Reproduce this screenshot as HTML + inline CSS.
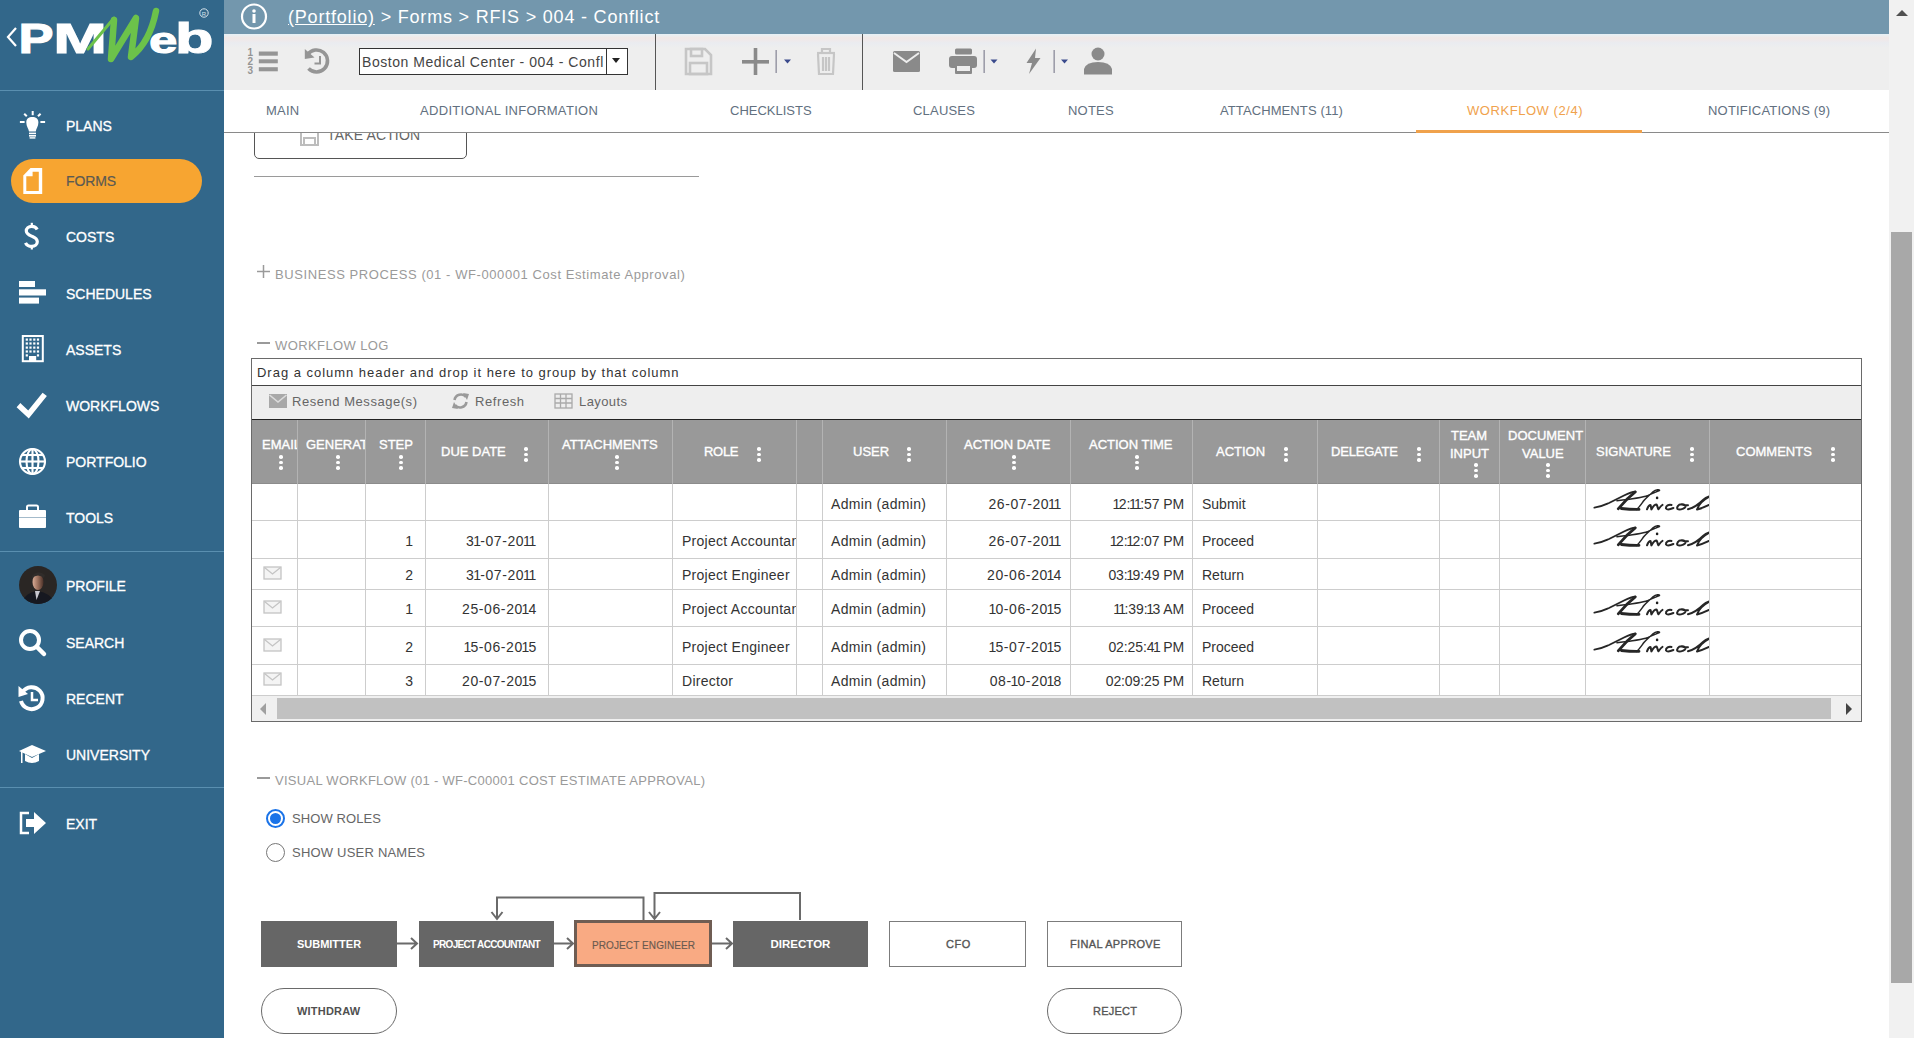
<!DOCTYPE html>
<html><head><meta charset="utf-8">
<style>
*{margin:0;padding:0;box-sizing:border-box}
html,body{width:1914px;height:1038px;overflow:hidden;background:#fff;font-family:"Liberation Sans",sans-serif}
.a{position:absolute}
.nw{white-space:nowrap}
#side{left:0;top:0;width:224px;height:1038px;background:#32678a}
.sep{left:0;width:224px;height:1px;background:#5a8fb0}
.mi{left:66px;color:#fff;font-size:14px;font-weight:400;letter-spacing:0px;-webkit-text-stroke:0.3px #fff;white-space:nowrap;line-height:16px}
.ic{fill:#fff}
#crumb{left:224px;top:0;width:1665px;height:34px;background:#7397ad}
#tool{left:224px;top:34px;width:1665px;height:56px;background:#eeeeee}
#tabs{left:224px;top:90px;width:1665px;height:43px;background:#fff;border-bottom:1px solid #8a8a8a}
.tab{top:104px;font-size:13px;color:#627080;white-space:nowrap;line-height:13px;letter-spacing:0.2px}
#vscroll{left:1889px;top:0;width:25px;height:1038px;background:#f1f1f1}
.sec{font-size:13px;color:#9a9a9a;white-space:nowrap;line-height:13px}
.g{font-size:13px;white-space:nowrap}
.hd{color:#fff;font-size:13px;line-height:13px;white-space:nowrap;-webkit-text-stroke:0.35px #fff}
.dots{width:3px}
.dots i{display:block;width:3px;height:3px;border-radius:50%;background:#fff;margin-bottom:2px}
.vl{width:1px;background:#d2d2d2}
.hl{height:1px;background:#d2d2d2}
.ct{font-size:14px;color:#333;white-space:nowrap;line-height:18px;letter-spacing:0.33px}
.box{height:46px;background:#666;color:#fff;font-weight:700;font-size:11px;display:flex;align-items:center;justify-content:center;white-space:nowrap}
</style></head>
<body>
<!-- SIDEBAR -->
<div id="side" class="a"></div>
<div class="a sep" style="top:90px"></div>
<div class="a sep" style="top:551px"></div>
<div class="a sep" style="top:787px"></div>


<svg class="a" style="left:0;top:0" width="224" height="90">
 <path d="M16,28 L8,37 L16,46" stroke="#fff" stroke-width="2.2" fill="none"/>
 <text transform="translate(18.5,53) scale(1.22,1)" fill="#fff" stroke="#fff" stroke-width="1.2" font-family="Liberation Sans" font-weight="700" font-size="43">P</text>
 <text transform="translate(53.3,53) scale(1.5,1)" fill="#fff" stroke="#fff" stroke-width="1" font-family="Liberation Sans" font-weight="700" font-size="43">M</text>
 <text transform="translate(149,53) scale(1.38,1)" fill="#fff" stroke="#fff" stroke-width="1" font-family="Liberation Sans" font-weight="700" font-size="37">e</text>
 <text transform="translate(175,53) scale(1.5,1)" fill="#fff" stroke="#fff" stroke-width="1" font-family="Liberation Sans" font-weight="700" font-size="42">b</text>
 <path d="M88,49 L114,18" stroke="#6cc24a" stroke-width="3" stroke-linecap="round" fill="none"/>
 <path d="M114,20 L111,59 L136,18 L131,57 Q150,42 156,11" stroke="#6cc24a" stroke-width="6.5" stroke-linecap="round" stroke-linejoin="round" fill="none"/>
 <circle cx="204" cy="13" r="4.2" stroke="#d8e4ec" stroke-width="1" fill="none"/>
 <text x="204" y="15.5" fill="#d8e4ec" font-family="Liberation Sans" font-size="6" text-anchor="middle">R</text>
</svg>
<div class="a" style="left:11px;top:159px;width:191px;height:44px;border-radius:22px;background:#f7a531"></div>
<div class="a mi" style="top:118px">PLANS</div>
<div class="a mi" style="top:173px;color:#5c5a52;font-weight:400;letter-spacing:-0.1px;-webkit-text-stroke:0.2px #5c5a52">FORMS</div>
<div class="a mi" style="top:229px">COSTS</div>
<div class="a mi" style="top:286px">SCHEDULES</div>
<div class="a mi" style="top:342px">ASSETS</div>
<div class="a mi" style="top:398px">WORKFLOWS</div>
<div class="a mi" style="top:454px">PORTFOLIO</div>
<div class="a mi" style="top:510px">TOOLS</div>
<div class="a mi" style="top:578px">PROFILE</div>
<div class="a mi" style="top:635px">SEARCH</div>
<div class="a mi" style="top:691px">RECENT</div>
<div class="a mi" style="top:747px">UNIVERSITY</div>
<div class="a mi" style="top:816px">EXIT</div>
<svg class="a" style="left:0;top:100px" width="60" height="750">
 <!-- plans bulb -->
 <g fill="#fff">
  <path d="M26.3,22.5 C26.3,18.5 28.8,17 32.3,17 C35.8,17 38.4,18.5 38.4,22.5 C38.4,26.5 36,28.5 35.8,31.6 L29,31.6 C28.7,28.5 26.3,26.5 26.3,22.5Z"/>
  <rect x="29" y="32.6" width="7" height="1.6"/>
  <rect x="29" y="35" width="7" height="1.6"/>
  <rect x="29.6" y="37.2" width="5.8" height="1.4"/>
  <rect x="31.7" y="11" width="2" height="4.2"/>
  <rect x="19.9" y="21" width="4.7" height="2"/>
  <rect x="40.4" y="21" width="4.7" height="2"/>
 </g>
 <path d="M24.2,13.7 L26.8,16.3 M40.6,13.7 L38,16.3" stroke="#fff" stroke-width="2"/>
 <!-- forms doc: y 168-194 -> local 68-94 -->
 <path d="M23.3,75.5 L30.5,68 L42.2,68 L42.2,94 L23.3,94 Z" fill="#fff"/>
 <path d="M26.3,76.3 L32.6,76.3 L32.6,71.7 L38.8,71.7 L38.8,91 L26.3,91 Z" fill="#f7a531"/>
 <!-- costs $: y 222-249 -> 122-149 -->
 <path d="M37.2,129.5 C36,127.2 34,126.4 31.8,126.4 C28.5,126.4 26.3,128.5 26.3,131 C26.3,134 29,135 32,136.3 C35,137.5 37.3,138.8 37.3,141.8 C37.3,144.5 35,146.3 31.8,146.3 C28.5,146.3 26.5,145 25.5,142.8" fill="none" stroke="#fff" stroke-width="3.2"/><rect x="30.7" y="122.8" width="2.2" height="3.5" fill="#fff"/><rect x="30.7" y="146.2" width="2.2" height="3.3" fill="#fff"/>
 <!-- schedules: 280-303 -> 180-203 -->
 <g fill="#fff"><rect x="19" y="181" width="16" height="6"/><rect x="19" y="189.3" width="27" height="6.2"/><rect x="19" y="197.6" width="20" height="6"/></g>
 <!-- assets: 335-362 -> 235-262 -->
 <g>
  <rect x="22.8" y="236" width="20" height="25.2" fill="none" stroke="#fff" stroke-width="2"/>
  <g fill="#fff"><rect x="25.7" y="238.5" width="2.2" height="2.2"/><rect x="29.4" y="238.5" width="2.2" height="2.2"/><rect x="33.2" y="238.5" width="2.2" height="2.2"/><rect x="36.9" y="238.5" width="2.2" height="2.2"/><rect x="25.7" y="242.4" width="2.2" height="2.2"/><rect x="29.4" y="242.4" width="2.2" height="2.2"/><rect x="33.2" y="242.4" width="2.2" height="2.2"/><rect x="36.9" y="242.4" width="2.2" height="2.2"/><rect x="25.7" y="246.5" width="2.2" height="2.2"/><rect x="29.4" y="246.5" width="2.2" height="2.2"/><rect x="33.2" y="246.5" width="2.2" height="2.2"/><rect x="36.9" y="246.5" width="2.2" height="2.2"/><rect x="25.7" y="250.4" width="2.2" height="2.2"/><rect x="29.4" y="250.4" width="2.2" height="2.2"/><rect x="33.2" y="250.4" width="2.2" height="2.2"/><rect x="36.9" y="250.4" width="2.2" height="2.2"/><rect x="25.7" y="254.3" width="2.2" height="2.2"/><rect x="36.9" y="254.3" width="2.2" height="2.2"/><rect x="29" y="256" width="7.2" height="5"/></g>
 </g>
 <!-- workflows check: 393-418 -> 293-318 -->
 <path d="M20.5,307 L28.5,314.5 L43,296.5" stroke="#fff" stroke-width="5.5" fill="none" stroke-linecap="square" stroke-linejoin="miter"/>
 <!-- portfolio globe: 448-475 -> 348-375 -->
 <g fill="none" stroke="#fff" stroke-width="2.1">
  <circle cx="32.5" cy="361.5" r="12.5"/>
  <ellipse cx="32.5" cy="361.5" rx="6" ry="12.5"/>
  <line x1="32.5" y1="349" x2="32.5" y2="374"/>
  <line x1="20" y1="361.5" x2="45" y2="361.5"/>
  <line x1="22" y1="355" x2="43" y2="355"/>
  <line x1="22" y1="368" x2="43" y2="368"/>
 </g>
 <!-- tools briefcase: 506-528 -> 406-428 -->
 <g fill="#fff">
  <rect x="19" y="410" width="27" height="18" rx="1"/>
  <rect x="27" y="405.5" width="11" height="6" rx="1.5" fill="none" stroke="#fff" stroke-width="2"/>
  <rect x="19" y="417" width="27" height="1" fill="#32678a" opacity="0.45"/>
 </g>
 <!-- profile avatar: center (38,585) -> local 485 -->
 <defs><linearGradient id="fg" x1="0" x2="1" y1="0" y2="0"><stop offset="0" stop-color="#d8ab95"/><stop offset="0.5" stop-color="#9a6f5c"/><stop offset="1" stop-color="#4a3028"/></linearGradient></defs>
 <clipPath id="av"><circle cx="38" cy="485" r="19"/></clipPath>
 <g clip-path="url(#av)">
  <rect x="19" y="466" width="38" height="38" fill="#2a2624"/>
  <ellipse cx="38" cy="482" rx="5.5" ry="8" fill="url(#fg)"/>
  <path d="M32,476 Q38,469 45,475 L44,478 Q38,473 32,478Z" fill="#302c2a"/>
  <path d="M20,505 Q24,493 37,491 Q52,493 56,505Z" fill="#161820"/>
  <path d="M35,491 L36.5,500 L40,491Z" fill="#c8c8d0"/>
 </g>
 <!-- search: 628-655 -> 528-555 -->
 <circle cx="30" cy="540" r="9" fill="none" stroke="#fff" stroke-width="4"/>
 <path d="M37,547 L44,554" stroke="#fff" stroke-width="4.5" stroke-linecap="round"/>
 <!-- recent: 685-711 -> 585-611 -->
 <path d="M22.5,592 A11,11 0 1 1 21,601" fill="none" stroke="#fff" stroke-width="4"/>
 <path d="M18.5,586 L28,594 L18.5,597Z" fill="#fff"/>
 <path d="M32,592 L32,600 L38,600" fill="none" stroke="#fff" stroke-width="2.5"/>
 <!-- university: 745-764 -> 645-664 -->
 <path d="M19,651 L32,645 L46,651 L32,657Z" fill="#fff"/>
 <path d="M25,654 L25,661 Q32,665 39,661 L39,654 L32,658Z" fill="#fff"/>
 <rect x="21" y="652" width="1.5" height="11" fill="#fff"/>
 <!-- exit: 812-834 -> 712-734 -->
 <path d="M29,713 L21,713 L21,733 L29,733" fill="none" stroke="#fff" stroke-width="2.5"/>
 <path d="M26,719 L34,719 L34,712 L46,723 L34,734 L34,727 L26,727Z" fill="#fff"/>
</svg>


<!-- CONTENT -->
<div class="a" style="left:254px;top:100px;width:213px;height:59px;border:1px solid #555;border-radius:5px;background:#fff"></div>
<svg class="a" style="left:299px;top:126px" width="22" height="22"><g fill="none" stroke="#bdbdbd" stroke-width="2"><path d="M2,2 L16,2 L19,5 L19,19 L2,19Z"/><rect x="5" y="12" width="11" height="7"/></g></svg>
<div class="a nw" style="left:327px;top:127px;font-size:14px;line-height:16px;color:#666;letter-spacing:0.15px">TAKE ACTION</div>
<div class="a" style="left:254px;top:176px;width:445px;height:1px;background:#9a9a9a"></div>
<!-- tabs cover (the button is under the tabs bar) -->

<!-- CRUMB -->
<div id="crumb" class="a"></div>
<div id="tool" class="a"></div>
<div id="tabs" class="a"></div>
<div id="vscroll" class="a"></div>

<!-- crumb content -->
<svg class="a" style="left:240px;top:3px" width="28" height="28">
 <circle cx="14" cy="13.5" r="12" fill="none" stroke="#fff" stroke-width="2.2"/>
 <circle cx="14" cy="8" r="1.8" fill="#fff"/>
 <rect x="12.5" y="11" width="3" height="9" fill="#fff"/>
</svg>
<div class="a nw" style="left:288px;top:6px;font-size:18px;line-height:22px;color:#fff;letter-spacing:0.8px"><span style="text-decoration:underline">(Portfolio)</span> &gt; Forms &gt; RFIS &gt; 004 - Conflict</div>
<!-- toolbar content -->
<div class="a" style="left:224px;top:34px;width:1665px;height:14px;background:linear-gradient(#e6f0f6 0px,#ecedee 2px,#f1e8e6 4px,#efe9ea 6px,#eaecf0 9px,#eeeeee 14px)"></div>
<div class="a" style="left:655px;top:34px;width:1px;height:56px;background:#555"></div>
<div class="a" style="left:862px;top:34px;width:1px;height:56px;background:#555"></div>
<svg class="a" style="left:240px;top:40px" width="900" height="45">
 <!-- list icon x249-278 y47-75 -->
 <g fill="#959595">
  <rect x="18.8" y="11.5" width="19" height="4.2"/>
  <rect x="18.8" y="19.3" width="19" height="4"/>
  <rect x="18.8" y="27.2" width="19" height="4.1"/>
  <text x="7.5" y="15.8" font-family="Liberation Sans" font-size="10" font-weight="700">1</text>
  <text x="7.5" y="24.5" font-family="Liberation Sans" font-size="10" font-weight="700">2</text>
  <text x="7.5" y="34" font-family="Liberation Sans" font-size="10" font-weight="700">3</text>
 </g>
 <!-- history -->
 <g>
  <path d="M67.6,14.5 A11,11 0 1 1 68.5,28.5" fill="none" stroke="#959595" stroke-width="3.6"/>
  <path d="M64.8,9 L74.5,17.5 L64.8,19Z" fill="#959595"/>
  <path d="M80,16 L80,23.5 L74.5,23.5" fill="none" stroke="#959595" stroke-width="2"/>
 </g>
 <!-- save x685-712 y48-75 -->
 <g fill="none" stroke="#c6c6c6" stroke-width="2.6">
  <path d="M446,9 L465,9 L471,15 L471,34 L446,34Z"/>
  <rect x="451" y="9" width="11" height="7"/>
  <rect x="450" y="23" width="17" height="11"/>
 </g>
 <!-- plus x742-769 -->
 <g fill="#8a8a8a"><rect x="502" y="20" width="27" height="3.6"/><rect x="513.7" y="8" width="3.6" height="27"/></g>
 <rect x="535.5" y="10" width="1.3" height="23" fill="#8a8a9a"/>
 <path d="M544,19.5 L551,19.5 L547.5,23.5Z" fill="#3a4a8c"/>
 <!-- trash x814-837 -->
 <g fill="none" stroke="#c6c6c6" stroke-width="2.2">
  <path d="M577,13 L595,13"/>
  <path d="M582,13 L582,9 L590,9 L590,13"/>
  <path d="M578,14 L579,34 L593,34 L594,14"/>
  <path d="M583,17 L583,31 M586,17 L586,31 M589,17 L589,31"/>
 </g>
 <!-- mail x893-920 y50-72 -->
 <rect x="653" y="11" width="27" height="21" rx="1.5" fill="#8a8a8a"/>
 <path d="M654,13 L666.5,22 L679,13" fill="none" stroke="#eeeeee" stroke-width="2"/>
 <!-- print x949-976 y48-74 -->
 <g fill="#8a8a8a">
  <rect x="715" y="8.5" width="17" height="6" rx="1.5"/>
  <rect x="709" y="16" width="28" height="12" rx="3"/>
  <rect x="715" y="24" width="17" height="10" rx="1"/>
  <rect x="717" y="26" width="13" height="5" fill="#eeeeee"/>
 </g>
 <rect x="743.5" y="10" width="1.3" height="23" fill="#8a8a9a"/>
 <path d="M750.5,19.5 L757.5,19.5 L754,23.5Z" fill="#3a4a8c"/>
 <!-- bolt x1026-1041 -->
 <path d="M796,8.5 L786.5,23 L792,23 L789,34 L800.5,18 L795,18Z" fill="#8a8a8a"/>
 <rect x="813.5" y="10" width="1.3" height="23" fill="#8a8a9a"/>
 <path d="M821,19.5 L828,19.5 L824.5,23.5Z" fill="#3a4a8c"/>
 <!-- user x1084-1112 -->
 <g fill="#8a8a8a"><circle cx="858" cy="14" r="6.5"/><path d="M844,34.5 L844,29 Q846,22 858,22 Q870,22 872,29 L872,34.5Z"/></g>
</svg>
<div class="a" style="left:359px;top:48px;width:269px;height:27px;border:1px solid #333;background:#fff"></div>
<div class="a" style="left:606px;top:49px;width:1px;height:25px;background:#333"></div>
<svg class="a" style="left:611px;top:57px" width="12" height="8"><path d="M1,1 L9,1 L5,6Z" fill="#222"/></svg>
<div class="a nw" style="left:362px;top:54px;font-size:14px;line-height:16px;color:#444;letter-spacing:0.55px;width:243px;overflow:hidden">Boston Medical Center - 004 - Confl</div>
<!-- tabs -->
<div class="a tab" style="left:266px">MAIN</div>
<div class="a tab" style="left:420px;letter-spacing:0.32px">ADDITIONAL INFORMATION</div>
<div class="a tab" style="left:730px;letter-spacing:0">CHECKLISTS</div>
<div class="a tab" style="left:913px">CLAUSES</div>
<div class="a tab" style="left:1068px">NOTES</div>
<div class="a tab" style="left:1220px;letter-spacing:0.1px">ATTACHMENTS (11)</div>
<div class="a tab" style="left:1467px;color:#f0a24c;letter-spacing:0.55px">WORKFLOW (2/4)</div>
<div class="a tab" style="left:1708px">NOTIFICATIONS (9)</div>
<div class="a" style="left:1416px;top:130px;width:226px;height:3px;background:#f0a24c"></div>

<!-- sections -->
<svg class="a" style="left:256px;top:264px" width="16" height="16"><path d="M1,7.5 L14,7.5 M7.5,1 L7.5,14" stroke="#9a9a9a" stroke-width="1.5"/></svg>
<div class="a sec" style="left:275px;top:268px;letter-spacing:0.58px">BUSINESS PROCESS (01 - WF-000001 Cost Estimate Approval)</div>
<div class="a" style="left:257px;top:342px;width:13px;height:1.5px;background:#9a9a9a"></div>
<div class="a sec" style="left:275px;top:339px;letter-spacing:0.4px">WORKFLOW LOG</div>
<div class="a" style="left:257px;top:777px;width:13px;height:1.5px;background:#9a9a9a"></div>
<div class="a sec" style="left:275px;top:774px;letter-spacing:0.28px">VISUAL WORKFLOW (01 - WF-C00001 COST ESTIMATE APPROVAL)</div>
<!-- radios -->
<div class="a" style="left:266px;top:809px;width:19px;height:19px;border-radius:50%;border:2px solid #1a73e8;background:#fff"></div>
<div class="a" style="left:270px;top:813px;width:11px;height:11px;border-radius:50%;background:#1a73e8"></div>
<div class="a sec" style="left:292px;top:812px;color:#666;letter-spacing:0.1px">SHOW ROLES</div>
<div class="a" style="left:266px;top:843px;width:19px;height:19px;border-radius:50%;border:1.5px solid #777;background:#fff"></div>
<div class="a sec" style="left:292px;top:846px;color:#666;letter-spacing:0.21px">SHOW USER NAMES</div>

<!-- GRID START -->
<div class="a" style="left:251px;top:358px;width:1611px;height:364px;border:1px solid #6a6a6a;background:#fff"></div>
<div class="a g" style="left:257px;top:365px;font-size:13px;line-height:15px;color:#333;letter-spacing:0.98px">Drag a column header and drop it here to group by that column</div>
<div class="a" style="left:252px;top:385px;width:1609px;height:1px;background:#444"></div>
<div class="a" style="left:252px;top:386px;width:1609px;height:33px;background:#eeeeee"></div>
<div class="a" style="left:252px;top:419px;width:1609px;height:1px;background:#222"></div>
<svg class="a" style="left:268px;top:393px" width="20" height="16"><rect x="1" y="1" width="18" height="14" fill="#a8a8a8"/><path d="M1.5,2 L10,9 L18.5,2" fill="none" stroke="#dcdcdc" stroke-width="1.6"/></svg>
<div class="a g" style="left:292px;top:394px;font-size:13px;line-height:15px;color:#666;letter-spacing:0.54px">Resend Message(s)</div>
<svg class="a" style="left:451px;top:392px" width="19" height="18"><g fill="none" stroke="#9a9a9a" stroke-width="2.6"><path d="M3.5,8 A6.5,6.5 0 0 1 15,5"/><path d="M15.5,10 A6.5,6.5 0 0 1 4,13"/></g><path d="M12,1 L18,2 L16,8Z M7,17 L1,16 L3,10Z" fill="#9a9a9a"/></svg>
<div class="a g" style="left:475px;top:394px;font-size:13px;line-height:15px;color:#666;letter-spacing:0.58px">Refresh</div>
<svg class="a" style="left:554px;top:393px" width="20" height="16"><g fill="none" stroke="#aaa" stroke-width="1.3"><rect x="1" y="1" width="17" height="14"/><path d="M1,5.5 L18,5.5 M1,10 L18,10 M6.5,1 L6.5,15 M12,1 L12,15"/></g></svg>
<div class="a g" style="left:579px;top:394px;font-size:13px;line-height:15px;color:#666;letter-spacing:0.41px">Layouts</div>
<div class="a" style="left:252px;top:420px;width:1609px;height:64px;background:#999999"></div>
<div class="a" style="left:252px;top:483px;width:1609px;height:1px;background:#8c8c8c"></div>
<div class="a" style="left:297px;top:420px;width:1px;height:64px;background:#b3b3b3"></div>
<div class="a" style="left:365px;top:420px;width:1px;height:64px;background:#b3b3b3"></div>
<div class="a" style="left:425px;top:420px;width:1px;height:64px;background:#b3b3b3"></div>
<div class="a" style="left:548px;top:420px;width:1px;height:64px;background:#b3b3b3"></div>
<div class="a" style="left:672px;top:420px;width:1px;height:64px;background:#b3b3b3"></div>
<div class="a" style="left:796px;top:420px;width:1px;height:64px;background:#b3b3b3"></div>
<div class="a" style="left:822px;top:420px;width:1px;height:64px;background:#b3b3b3"></div>
<div class="a" style="left:946px;top:420px;width:1px;height:64px;background:#b3b3b3"></div>
<div class="a" style="left:1070px;top:420px;width:1px;height:64px;background:#b3b3b3"></div>
<div class="a" style="left:1192px;top:420px;width:1px;height:64px;background:#b3b3b3"></div>
<div class="a" style="left:1317px;top:420px;width:1px;height:64px;background:#b3b3b3"></div>
<div class="a" style="left:1439px;top:420px;width:1px;height:64px;background:#b3b3b3"></div>
<div class="a" style="left:1499px;top:420px;width:1px;height:64px;background:#b3b3b3"></div>
<div class="a" style="left:1585px;top:420px;width:1px;height:64px;background:#b3b3b3"></div>
<div class="a" style="left:1709px;top:420px;width:1px;height:64px;background:#b3b3b3"></div>
<div class="a hd" style="left:262px;top:438px;letter-spacing:0.00px;width:35px;overflow:hidden">EMAIL</div>
<div class="a" style="left:279.2px;top:455.0px;width:4px"><i style="display:block;width:3.6px;height:3.6px;border-radius:50%;background:#fff;margin-bottom:2px"></i><i style="display:block;width:3.6px;height:3.6px;border-radius:50%;background:#fff;margin-bottom:2px"></i><i style="display:block;width:3.6px;height:3.6px;border-radius:50%;background:#fff"></i></div>
<div class="a hd" style="left:306px;top:438px;letter-spacing:0.00px;width:59px;overflow:hidden">GENERATED</div>
<div class="a" style="left:336.2px;top:455.0px;width:4px"><i style="display:block;width:3.6px;height:3.6px;border-radius:50%;background:#fff;margin-bottom:2px"></i><i style="display:block;width:3.6px;height:3.6px;border-radius:50%;background:#fff;margin-bottom:2px"></i><i style="display:block;width:3.6px;height:3.6px;border-radius:50%;background:#fff"></i></div>
<div class="a hd" style="left:379px;top:438px;letter-spacing:0.00px">STEP</div>
<div class="a" style="left:399.2px;top:455.0px;width:4px"><i style="display:block;width:3.6px;height:3.6px;border-radius:50%;background:#fff;margin-bottom:2px"></i><i style="display:block;width:3.6px;height:3.6px;border-radius:50%;background:#fff;margin-bottom:2px"></i><i style="display:block;width:3.6px;height:3.6px;border-radius:50%;background:#fff"></i></div>
<div class="a hd" style="left:441px;top:445px;letter-spacing:0.00px">DUE DATE</div>
<div class="a" style="left:524.2px;top:447.0px;width:4px"><i style="display:block;width:3.6px;height:3.6px;border-radius:50%;background:#fff;margin-bottom:2px"></i><i style="display:block;width:3.6px;height:3.6px;border-radius:50%;background:#fff;margin-bottom:2px"></i><i style="display:block;width:3.6px;height:3.6px;border-radius:50%;background:#fff"></i></div>
<div class="a hd" style="left:562px;top:438px;letter-spacing:0.00px">ATTACHMENTS</div>
<div class="a" style="left:615.2px;top:455.0px;width:4px"><i style="display:block;width:3.6px;height:3.6px;border-radius:50%;background:#fff;margin-bottom:2px"></i><i style="display:block;width:3.6px;height:3.6px;border-radius:50%;background:#fff;margin-bottom:2px"></i><i style="display:block;width:3.6px;height:3.6px;border-radius:50%;background:#fff"></i></div>
<div class="a hd" style="left:704px;top:445px;letter-spacing:-0.30px">ROLE</div>
<div class="a" style="left:757.2px;top:447.0px;width:4px"><i style="display:block;width:3.6px;height:3.6px;border-radius:50%;background:#fff;margin-bottom:2px"></i><i style="display:block;width:3.6px;height:3.6px;border-radius:50%;background:#fff;margin-bottom:2px"></i><i style="display:block;width:3.6px;height:3.6px;border-radius:50%;background:#fff"></i></div>
<div class="a hd" style="left:853px;top:445px;letter-spacing:0.00px">USER</div>
<div class="a" style="left:907.2px;top:447.0px;width:4px"><i style="display:block;width:3.6px;height:3.6px;border-radius:50%;background:#fff;margin-bottom:2px"></i><i style="display:block;width:3.6px;height:3.6px;border-radius:50%;background:#fff;margin-bottom:2px"></i><i style="display:block;width:3.6px;height:3.6px;border-radius:50%;background:#fff"></i></div>
<div class="a hd" style="left:964px;top:438px;letter-spacing:0.00px">ACTION DATE</div>
<div class="a" style="left:1012.2px;top:455.0px;width:4px"><i style="display:block;width:3.6px;height:3.6px;border-radius:50%;background:#fff;margin-bottom:2px"></i><i style="display:block;width:3.6px;height:3.6px;border-radius:50%;background:#fff;margin-bottom:2px"></i><i style="display:block;width:3.6px;height:3.6px;border-radius:50%;background:#fff"></i></div>
<div class="a hd" style="left:1089px;top:438px;letter-spacing:0.00px">ACTION TIME</div>
<div class="a" style="left:1135.2px;top:455.0px;width:4px"><i style="display:block;width:3.6px;height:3.6px;border-radius:50%;background:#fff;margin-bottom:2px"></i><i style="display:block;width:3.6px;height:3.6px;border-radius:50%;background:#fff;margin-bottom:2px"></i><i style="display:block;width:3.6px;height:3.6px;border-radius:50%;background:#fff"></i></div>
<div class="a hd" style="left:1216px;top:445px;letter-spacing:0.00px">ACTION</div>
<div class="a" style="left:1284.2px;top:447.0px;width:4px"><i style="display:block;width:3.6px;height:3.6px;border-radius:50%;background:#fff;margin-bottom:2px"></i><i style="display:block;width:3.6px;height:3.6px;border-radius:50%;background:#fff;margin-bottom:2px"></i><i style="display:block;width:3.6px;height:3.6px;border-radius:50%;background:#fff"></i></div>
<div class="a hd" style="left:1331px;top:445px;letter-spacing:-0.20px">DELEGATE</div>
<div class="a" style="left:1417.2px;top:447.0px;width:4px"><i style="display:block;width:3.6px;height:3.6px;border-radius:50%;background:#fff;margin-bottom:2px"></i><i style="display:block;width:3.6px;height:3.6px;border-radius:50%;background:#fff;margin-bottom:2px"></i><i style="display:block;width:3.6px;height:3.6px;border-radius:50%;background:#fff"></i></div>
<div class="a hd" style="left:1451px;top:429px;letter-spacing:0.00px">TEAM</div>
<div class="a hd" style="left:1450px;top:447px;letter-spacing:0.00px">INPUT</div>
<div class="a" style="left:1474.2px;top:463.0px;width:4px"><i style="display:block;width:3.6px;height:3.6px;border-radius:50%;background:#fff;margin-bottom:2px"></i><i style="display:block;width:3.6px;height:3.6px;border-radius:50%;background:#fff;margin-bottom:2px"></i><i style="display:block;width:3.6px;height:3.6px;border-radius:50%;background:#fff"></i></div>
<div class="a hd" style="left:1508px;top:429px;letter-spacing:0.00px">DOCUMENT</div>
<div class="a hd" style="left:1522px;top:447px;letter-spacing:0.00px">VALUE</div>
<div class="a" style="left:1546.2px;top:463.0px;width:4px"><i style="display:block;width:3.6px;height:3.6px;border-radius:50%;background:#fff;margin-bottom:2px"></i><i style="display:block;width:3.6px;height:3.6px;border-radius:50%;background:#fff;margin-bottom:2px"></i><i style="display:block;width:3.6px;height:3.6px;border-radius:50%;background:#fff"></i></div>
<div class="a hd" style="left:1596px;top:445px;letter-spacing:0.00px">SIGNATURE</div>
<div class="a" style="left:1690.2px;top:447.0px;width:4px"><i style="display:block;width:3.6px;height:3.6px;border-radius:50%;background:#fff;margin-bottom:2px"></i><i style="display:block;width:3.6px;height:3.6px;border-radius:50%;background:#fff;margin-bottom:2px"></i><i style="display:block;width:3.6px;height:3.6px;border-radius:50%;background:#fff"></i></div>
<div class="a hd" style="left:1736px;top:445px;letter-spacing:0.00px">COMMENTS</div>
<div class="a" style="left:1831.2px;top:447.0px;width:4px"><i style="display:block;width:3.6px;height:3.6px;border-radius:50%;background:#fff;margin-bottom:2px"></i><i style="display:block;width:3.6px;height:3.6px;border-radius:50%;background:#fff;margin-bottom:2px"></i><i style="display:block;width:3.6px;height:3.6px;border-radius:50%;background:#fff"></i></div>
<div class="a" style="left:252px;top:520px;width:1609px;height:1px;background:#cdcdcd"></div>
<div class="a" style="left:252px;top:558px;width:1609px;height:1px;background:#cdcdcd"></div>
<div class="a" style="left:252px;top:589px;width:1609px;height:1px;background:#cdcdcd"></div>
<div class="a" style="left:252px;top:626px;width:1609px;height:1px;background:#cdcdcd"></div>
<div class="a" style="left:252px;top:664px;width:1609px;height:1px;background:#cdcdcd"></div>
<div class="a" style="left:252px;top:695px;width:1609px;height:1px;background:#cdcdcd"></div>
<div class="a" style="left:297px;top:484px;width:1px;height:212px;background:#cdcdcd"></div>
<div class="a" style="left:365px;top:484px;width:1px;height:212px;background:#cdcdcd"></div>
<div class="a" style="left:425px;top:484px;width:1px;height:212px;background:#cdcdcd"></div>
<div class="a" style="left:548px;top:484px;width:1px;height:212px;background:#cdcdcd"></div>
<div class="a" style="left:672px;top:484px;width:1px;height:212px;background:#cdcdcd"></div>
<div class="a" style="left:796px;top:484px;width:1px;height:212px;background:#cdcdcd"></div>
<div class="a" style="left:822px;top:484px;width:1px;height:212px;background:#cdcdcd"></div>
<div class="a" style="left:946px;top:484px;width:1px;height:212px;background:#cdcdcd"></div>
<div class="a" style="left:1070px;top:484px;width:1px;height:212px;background:#cdcdcd"></div>
<div class="a" style="left:1192px;top:484px;width:1px;height:212px;background:#cdcdcd"></div>
<div class="a" style="left:1317px;top:484px;width:1px;height:212px;background:#cdcdcd"></div>
<div class="a" style="left:1439px;top:484px;width:1px;height:212px;background:#cdcdcd"></div>
<div class="a" style="left:1499px;top:484px;width:1px;height:212px;background:#cdcdcd"></div>
<div class="a" style="left:1585px;top:484px;width:1px;height:212px;background:#cdcdcd"></div>
<div class="a" style="left:1709px;top:484px;width:1px;height:212px;background:#cdcdcd"></div>
<div class="a ct" style="left:831px;top:495px">Admin (admin)</div>
<div class="a ct" style="left:946px;top:495px;width:116px;text-align:right;letter-spacing:0.60px">26-07-20<span style="margin:0 -1.35px">1</span><span style="margin-left:-1.35px">1</span></div>
<div class="a ct" style="left:1070px;top:495px;width:114px;text-align:right;letter-spacing:-0.10px"><span style="margin:0 -1.35px">1</span>2:<span style="margin:0 -1.35px">1</span><span style="margin:0 -1.35px">1</span>:57 PM</div>
<div class="a ct" style="left:1202px;top:495px;letter-spacing:0.00px">Submit</div>
<svg class="a" style="left:1593px;top:487px;overflow:hidden" width="116" height="28"><g fill="none" stroke="#262626" stroke-linecap="round" stroke-linejoin="round"><path stroke-width="1.9" d="M1.4,20.6 C8,20 12,17.8 16,16 C21,13.5 26,11 31,8.5 C36,6 40,4.5 42.3,4.7"/><path stroke-width="2.7" d="M42.3,4.9 C37,9 30,16 25.2,21.8"/><path stroke-width="1.5" d="M23.9,13.7 C35,12.5 48,11 55,8.5 C61,6 65,4 66.5,3.5 C67,2.5 63,2.3 60,4.9 C56,8.5 52,12 50.3,14.3 C48,17.5 46,20.5 43.4,22.5"/><path stroke-width="2.8" d="M28.3,21.5 C33,22 39,22.6 46,22.4"/><path stroke-width="2" d="M54,22.3 C55,19.5 56.5,18 57.5,18 C58,19 58,21 58.4,22.4 C60,19.5 62,17.5 63.5,17.5 C64.5,18.5 64.5,21 65.5,22.3 C67,20 68,18.5 69.5,17.8"/><path stroke-width="2" d="M78.5,18 C76,17 72.5,19 73,21.5 C74,22.8 77,22.5 80.4,21"/><path stroke-width="2" d="M88.5,17.3 C85,17.3 83.5,20.5 84.5,22 C86,23 90,22.5 92,20.5 C93.5,18.5 91,17 88.5,17.3 C91,18.5 93,18.5 95,18.2"/><path stroke-width="2" d="M95,22.3 C100,21 106,17 110,13 C112,11 114,10 116,9.5 M116,10 C111,12.5 106,17 104,22.5 C108,21.5 112,20 116,18"/></g><circle cx="64.1" cy="10.9" r="1.3" fill="#1e1e1e"/></svg>
<div class="a ct" style="left:365px;top:532px;width:48px;text-align:right;letter-spacing:0.00px">1</div>
<div class="a ct" style="left:425px;top:532px;width:112px;text-align:right;letter-spacing:0.60px">3<span style="margin:0 -1.35px">1</span>-07-20<span style="margin:0 -1.35px">1</span><span style="margin-left:-1.35px">1</span></div>
<div class="a ct" style="left:682px;top:532px;width:114px;overflow:hidden;letter-spacing:0.27px">Project Accountant</div>
<div class="a ct" style="left:831px;top:532px">Admin (admin)</div>
<div class="a ct" style="left:946px;top:532px;width:116px;text-align:right;letter-spacing:0.60px">26-07-20<span style="margin:0 -1.35px">1</span><span style="margin-left:-1.35px">1</span></div>
<div class="a ct" style="left:1070px;top:532px;width:114px;text-align:right;letter-spacing:-0.10px"><span style="margin:0 -1.35px">1</span>2:<span style="margin:0 -1.35px">1</span>2:07 PM</div>
<div class="a ct" style="left:1202px;top:532px;letter-spacing:0.00px">Proceed</div>
<svg class="a" style="left:1593px;top:523px;overflow:hidden" width="116" height="28"><g fill="none" stroke="#262626" stroke-linecap="round" stroke-linejoin="round"><path stroke-width="1.9" d="M1.4,20.6 C8,20 12,17.8 16,16 C21,13.5 26,11 31,8.5 C36,6 40,4.5 42.3,4.7"/><path stroke-width="2.7" d="M42.3,4.9 C37,9 30,16 25.2,21.8"/><path stroke-width="1.5" d="M23.9,13.7 C35,12.5 48,11 55,8.5 C61,6 65,4 66.5,3.5 C67,2.5 63,2.3 60,4.9 C56,8.5 52,12 50.3,14.3 C48,17.5 46,20.5 43.4,22.5"/><path stroke-width="2.8" d="M28.3,21.5 C33,22 39,22.6 46,22.4"/><path stroke-width="2" d="M54,22.3 C55,19.5 56.5,18 57.5,18 C58,19 58,21 58.4,22.4 C60,19.5 62,17.5 63.5,17.5 C64.5,18.5 64.5,21 65.5,22.3 C67,20 68,18.5 69.5,17.8"/><path stroke-width="2" d="M78.5,18 C76,17 72.5,19 73,21.5 C74,22.8 77,22.5 80.4,21"/><path stroke-width="2" d="M88.5,17.3 C85,17.3 83.5,20.5 84.5,22 C86,23 90,22.5 92,20.5 C93.5,18.5 91,17 88.5,17.3 C91,18.5 93,18.5 95,18.2"/><path stroke-width="2" d="M95,22.3 C100,21 106,17 110,13 C112,11 114,10 116,9.5 M116,10 C111,12.5 106,17 104,22.5 C108,21.5 112,20 116,18"/></g><circle cx="64.1" cy="10.9" r="1.3" fill="#1e1e1e"/></svg>
<div class="a ct" style="left:365px;top:566px;width:48px;text-align:right;letter-spacing:0.00px">2</div>
<div class="a ct" style="left:425px;top:566px;width:112px;text-align:right;letter-spacing:0.60px">3<span style="margin:0 -1.35px">1</span>-07-20<span style="margin:0 -1.35px">1</span><span style="margin-left:-1.35px">1</span></div>
<div class="a ct" style="left:682px;top:566px;width:114px;overflow:hidden;letter-spacing:0.27px">Project Engineer</div>
<div class="a ct" style="left:831px;top:566px">Admin (admin)</div>
<div class="a ct" style="left:946px;top:566px;width:116px;text-align:right;letter-spacing:0.60px">20-06-20<span style="margin:0 -1.35px">1</span>4</div>
<div class="a ct" style="left:1070px;top:566px;width:114px;text-align:right;letter-spacing:-0.10px">03:<span style="margin:0 -1.35px">1</span>9:49 PM</div>
<div class="a ct" style="left:1202px;top:566px;letter-spacing:0.00px">Return</div>
<svg class="a" style="left:263px;top:566px" width="20" height="14"><rect x="1" y="1" width="17" height="12" fill="#f4f4f4" stroke="#c4c4c4" stroke-width="1.3"/><path d="M1.5,1.5 L9.5,8 L17.5,1.5" fill="none" stroke="#c4c4c4" stroke-width="1.3"/></svg>
<div class="a ct" style="left:365px;top:600px;width:48px;text-align:right;letter-spacing:0.00px">1</div>
<div class="a ct" style="left:425px;top:600px;width:112px;text-align:right;letter-spacing:0.60px">25-06-20<span style="margin:0 -1.35px">1</span>4</div>
<div class="a ct" style="left:682px;top:600px;width:114px;overflow:hidden;letter-spacing:0.27px">Project Accountant</div>
<div class="a ct" style="left:831px;top:600px">Admin (admin)</div>
<div class="a ct" style="left:946px;top:600px;width:116px;text-align:right;letter-spacing:0.60px"><span style="margin:0 -1.35px">1</span>0-06-20<span style="margin:0 -1.35px">1</span>5</div>
<div class="a ct" style="left:1070px;top:600px;width:114px;text-align:right;letter-spacing:-0.10px"><span style="margin:0 -1.35px">1</span><span style="margin:0 -1.35px">1</span>:39:<span style="margin:0 -1.35px">1</span>3 AM</div>
<div class="a ct" style="left:1202px;top:600px;letter-spacing:0.00px">Proceed</div>
<svg class="a" style="left:1593px;top:592px;overflow:hidden" width="116" height="28"><g fill="none" stroke="#262626" stroke-linecap="round" stroke-linejoin="round"><path stroke-width="1.9" d="M1.4,20.6 C8,20 12,17.8 16,16 C21,13.5 26,11 31,8.5 C36,6 40,4.5 42.3,4.7"/><path stroke-width="2.7" d="M42.3,4.9 C37,9 30,16 25.2,21.8"/><path stroke-width="1.5" d="M23.9,13.7 C35,12.5 48,11 55,8.5 C61,6 65,4 66.5,3.5 C67,2.5 63,2.3 60,4.9 C56,8.5 52,12 50.3,14.3 C48,17.5 46,20.5 43.4,22.5"/><path stroke-width="2.8" d="M28.3,21.5 C33,22 39,22.6 46,22.4"/><path stroke-width="2" d="M54,22.3 C55,19.5 56.5,18 57.5,18 C58,19 58,21 58.4,22.4 C60,19.5 62,17.5 63.5,17.5 C64.5,18.5 64.5,21 65.5,22.3 C67,20 68,18.5 69.5,17.8"/><path stroke-width="2" d="M78.5,18 C76,17 72.5,19 73,21.5 C74,22.8 77,22.5 80.4,21"/><path stroke-width="2" d="M88.5,17.3 C85,17.3 83.5,20.5 84.5,22 C86,23 90,22.5 92,20.5 C93.5,18.5 91,17 88.5,17.3 C91,18.5 93,18.5 95,18.2"/><path stroke-width="2" d="M95,22.3 C100,21 106,17 110,13 C112,11 114,10 116,9.5 M116,10 C111,12.5 106,17 104,22.5 C108,21.5 112,20 116,18"/></g><circle cx="64.1" cy="10.9" r="1.3" fill="#1e1e1e"/></svg>
<svg class="a" style="left:263px;top:600px" width="20" height="14"><rect x="1" y="1" width="17" height="12" fill="#f4f4f4" stroke="#c4c4c4" stroke-width="1.3"/><path d="M1.5,1.5 L9.5,8 L17.5,1.5" fill="none" stroke="#c4c4c4" stroke-width="1.3"/></svg>
<div class="a ct" style="left:365px;top:638px;width:48px;text-align:right;letter-spacing:0.00px">2</div>
<div class="a ct" style="left:425px;top:638px;width:112px;text-align:right;letter-spacing:0.60px"><span style="margin:0 -1.35px">1</span>5-06-20<span style="margin:0 -1.35px">1</span>5</div>
<div class="a ct" style="left:682px;top:638px;width:114px;overflow:hidden;letter-spacing:0.27px">Project Engineer</div>
<div class="a ct" style="left:831px;top:638px">Admin (admin)</div>
<div class="a ct" style="left:946px;top:638px;width:116px;text-align:right;letter-spacing:0.60px"><span style="margin:0 -1.35px">1</span>5-07-20<span style="margin:0 -1.35px">1</span>5</div>
<div class="a ct" style="left:1070px;top:638px;width:114px;text-align:right;letter-spacing:-0.10px">02:25:4<span style="margin:0 -1.35px">1</span> PM</div>
<div class="a ct" style="left:1202px;top:638px;letter-spacing:0.00px">Proceed</div>
<svg class="a" style="left:1593px;top:629px;overflow:hidden" width="116" height="28"><g fill="none" stroke="#262626" stroke-linecap="round" stroke-linejoin="round"><path stroke-width="1.9" d="M1.4,20.6 C8,20 12,17.8 16,16 C21,13.5 26,11 31,8.5 C36,6 40,4.5 42.3,4.7"/><path stroke-width="2.7" d="M42.3,4.9 C37,9 30,16 25.2,21.8"/><path stroke-width="1.5" d="M23.9,13.7 C35,12.5 48,11 55,8.5 C61,6 65,4 66.5,3.5 C67,2.5 63,2.3 60,4.9 C56,8.5 52,12 50.3,14.3 C48,17.5 46,20.5 43.4,22.5"/><path stroke-width="2.8" d="M28.3,21.5 C33,22 39,22.6 46,22.4"/><path stroke-width="2" d="M54,22.3 C55,19.5 56.5,18 57.5,18 C58,19 58,21 58.4,22.4 C60,19.5 62,17.5 63.5,17.5 C64.5,18.5 64.5,21 65.5,22.3 C67,20 68,18.5 69.5,17.8"/><path stroke-width="2" d="M78.5,18 C76,17 72.5,19 73,21.5 C74,22.8 77,22.5 80.4,21"/><path stroke-width="2" d="M88.5,17.3 C85,17.3 83.5,20.5 84.5,22 C86,23 90,22.5 92,20.5 C93.5,18.5 91,17 88.5,17.3 C91,18.5 93,18.5 95,18.2"/><path stroke-width="2" d="M95,22.3 C100,21 106,17 110,13 C112,11 114,10 116,9.5 M116,10 C111,12.5 106,17 104,22.5 C108,21.5 112,20 116,18"/></g><circle cx="64.1" cy="10.9" r="1.3" fill="#1e1e1e"/></svg>
<svg class="a" style="left:263px;top:638px" width="20" height="14"><rect x="1" y="1" width="17" height="12" fill="#f4f4f4" stroke="#c4c4c4" stroke-width="1.3"/><path d="M1.5,1.5 L9.5,8 L17.5,1.5" fill="none" stroke="#c4c4c4" stroke-width="1.3"/></svg>
<div class="a ct" style="left:365px;top:672px;width:48px;text-align:right;letter-spacing:0.00px">3</div>
<div class="a ct" style="left:425px;top:672px;width:112px;text-align:right;letter-spacing:0.60px">20-07-20<span style="margin:0 -1.35px">1</span>5</div>
<div class="a ct" style="left:682px;top:672px;width:114px;overflow:hidden;letter-spacing:0.27px">Director</div>
<div class="a ct" style="left:831px;top:672px">Admin (admin)</div>
<div class="a ct" style="left:946px;top:672px;width:116px;text-align:right;letter-spacing:0.60px">08-<span style="margin:0 -1.35px">1</span>0-20<span style="margin:0 -1.35px">1</span>8</div>
<div class="a ct" style="left:1070px;top:672px;width:114px;text-align:right;letter-spacing:-0.10px">02:09:25 PM</div>
<div class="a ct" style="left:1202px;top:672px;letter-spacing:0.00px">Return</div>
<svg class="a" style="left:263px;top:672px" width="20" height="14"><rect x="1" y="1" width="17" height="12" fill="#f4f4f4" stroke="#c4c4c4" stroke-width="1.3"/><path d="M1.5,1.5 L9.5,8 L17.5,1.5" fill="none" stroke="#c4c4c4" stroke-width="1.3"/></svg>
<div class="a" style="left:252px;top:696px;width:1609px;height:25px;background:#f0f0f0"></div>
<div class="a" style="left:277px;top:698px;width:1554px;height:21px;background:#c1c1c1"></div>
<svg class="a" style="left:258px;top:702px" width="10" height="14"><path d="M8,1 L8,13 L2,7Z" fill="#a0a0a0"/></svg>
<svg class="a" style="left:1844px;top:702px" width="10" height="14"><path d="M2,1 L2,13 L8,7Z" fill="#444"/></svg>
<!-- GRID END -->

<!-- WORKFLOW DIAGRAM -->
<div class="a box" style="left:261px;top:921px;width:136px">SUBMITTER</div>
<div class="a box" style="left:419px;top:921px;width:135px;font-size:10px;letter-spacing:-0.7px">PROJECT ACCOUNTANT</div>
<div class="a" style="left:574px;top:920px;width:138px;height:47px;background:#f9aa83;border:3px solid #6f5d53"></div>
<div class="a nw" style="left:592px;top:940px;font-size:10px;line-height:12px;color:#6b5a4f;letter-spacing:0.1px;-webkit-text-stroke:0.15px #6b5a4f">PROJECT ENGINEER</div>
<div class="a box" style="left:733px;top:921px;width:135px;font-size:11.5px">DIRECTOR</div>
<div class="a" style="left:889px;top:921px;width:137px;height:46px;border:1.6px solid #7c7c7c;background:#fff"></div>
<div class="a nw" style="left:946px;top:938px;font-size:11px;line-height:13px;color:#555;font-weight:400;-webkit-text-stroke:0.35px #555;letter-spacing:0.6px">CFO</div>
<div class="a" style="left:1047px;top:921px;width:135px;height:46px;border:1.6px solid #7c7c7c;background:#fff"></div>
<div class="a nw" style="left:1070px;top:938px;font-size:11px;line-height:13px;color:#555;font-weight:400;-webkit-text-stroke:0.35px #555;letter-spacing:0.33px">FINAL APPROVE</div>
<div class="a" style="left:261px;top:988px;width:136px;height:46px;border:1.5px solid #6a6a6a;border-radius:23px;background:#fff"></div>
<div class="a nw" style="left:297px;top:1005px;font-size:11px;line-height:13px;color:#505050;font-weight:700;letter-spacing:0.2px">WITHDRAW</div>
<div class="a" style="left:1047px;top:988px;width:135px;height:46px;border:1.5px solid #6a6a6a;border-radius:23px;background:#fff"></div>
<div class="a nw" style="left:1093px;top:1005px;font-size:11px;line-height:13px;color:#555;font-weight:400;-webkit-text-stroke:0.35px #555;letter-spacing:0.25px">REJECT</div>
<svg class="a" style="left:0;top:0;pointer-events:none" width="1914" height="1038">
 <g fill="none" stroke="#6a6a6a" stroke-width="2">
  <path d="M397,943.5 L417,943.5 M411,938 L417,943.5 L411,949"/>
  <path d="M554,943.5 L573,943.5 M567,938 L573,943.5 L567,949"/>
  <path d="M712,943.5 L732,943.5 M726,938 L732,943.5 L726,949"/>
  <path d="M643.5,920 L643.5,897.5 L497,897.5 L497,919 M491.5,912 L497,919 L502.5,912"/>
  <path d="M800,920 L800,893 L654.5,893 L654.5,919 M649,912 L654.5,919 L660,912"/>
 </g>
</svg>

<!-- scrollbar -->
<svg class="a" style="left:1895px;top:8px" width="14" height="10"><path d="M1,8 L13,8 L7,2Z" fill="#505050"/></svg>
<div class="a" style="left:1891px;top:232px;width:21px;height:751px;background:#a8a8a8"></div>

</body></html>
